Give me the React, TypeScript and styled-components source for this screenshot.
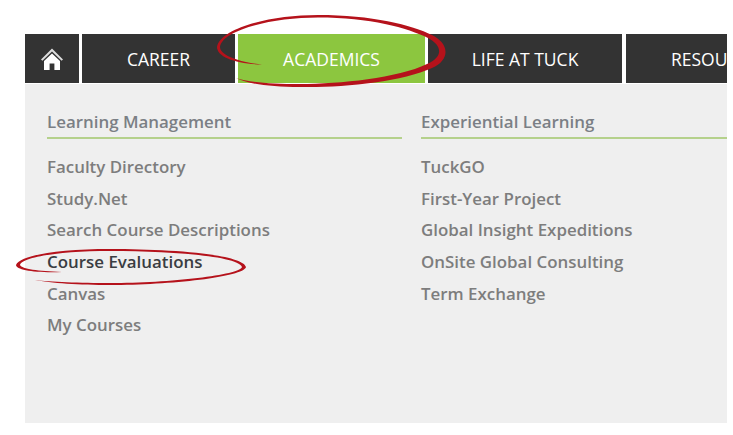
import { FC } from "react";
import styled, { createGlobalStyle } from "styled-components";

const columns = [
  {
    title: "Learning Management",
    links: ["Faculty Directory", "Study.Net", "Search Course Descriptions", "Course Evaluations", "Canvas", "My Courses"],
  },
  {
    title: "Experiential Learning",
    links: ["TuckGO", "First-Year Project", "Global Insight Expeditions", "OnSite Global Consulting", "Term Exchange"],
  },
];

const App: FC = () => {
  return (
    <SPage>
      <GlobalStyle />
      <SNav>
        <SHomeTab>
          <svg width="24" height="24" viewBox="0 0 24 24" aria-hidden="true">
            <path d="M12 1.5 1 12.5l1.4 1.3L12 4.6l9.6 9.2 1.4-1.3z" fill="#ddd" />
            <path d="M12 6.4 4 14v9h5.6v-6.6h4.8V23H20v-9z" fill="#fff" />
          </svg>
        </SHomeTab>
        <STab $width={153}>CAREER</STab>
        <STab $width={187} $active>ACADEMICS</STab>
        <STab $width={194}>LIFE AT TUCK</STab>
        <SCutTab>RESOU</SCutTab>
      </SNav>
      <SPanel>
        {columns.map((column) => (
          <SColumn key={column.title}>
            <SHeading>{column.title}</SHeading>
            <SList>
              {column.links.map((link) => (
                <SLink key={link} $current={link === "Course Evaluations"}>{link}</SLink>
              ))}
            </SList>
          </SColumn>
        ))}
      </SPanel>
      <SMarks viewBox="0 0 733 435" aria-hidden="true">
        <path d="M262 64.5C236 64 217 57 217 47C220 28 270 15 318 15C372 15 412 25 432 35C450 44 450 60 432 68C402 82 340 88 300 87C270 87 248 84 236 78C248 82 270 84 300 84C340 84 398 78 427 64C443 57 443 46 428 38C408 28 370 17.5 318 17.5C272 17.5 222 30 220 47C220 55 238 62 262 64.5Z" />
        <path d="M62 272C35 273 16 270 16 265C20 255 60 249 110 249C170 249 242 254 246 267C244 277 170 285 110 285C80 285 50 283 35 280C50 282 80 283 110 283C170 283 240 275 242 267C238 256 170 251 110 251C60 251 22 257 20 265C22 269 38 271 62 272Z" />
      </SMarks>
    </SPage>
  );
};

export default App;

const GlobalStyle = createGlobalStyle`
  html, body {
    margin: 0;
    background: #fff;
  }
`;

const SPage = styled.div`
  position: relative;
  width: 733px;
  height: 435px;
  padding: 34px 6px 13px 25px;
  box-sizing: border-box;
  overflow: hidden;
  font-family: "Open Sans", "Noto Sans", sans-serif;
`;

const SNav = styled.nav`
  display: flex;
  gap: 3px;
  height: 49px;
  overflow: hidden;
`;

const SHomeTab = styled.div`
  flex: 0 0 54px;
  display: flex;
  align-items: center;
  justify-content: center;
  background: #333;
`;

const STab = styled.div<{ $width: number; $active?: boolean }>`
  flex: 0 0 ${(p) => p.$width}px;
  display: flex;
  align-items: center;
  justify-content: center;
  background: ${(p) => (p.$active ? "#8cc63f" : "#333")};
  color: #fff;
  font-size: 17.5px;
`;

const SCutTab = styled(STab).attrs({ $width: 100 })`
  justify-content: flex-start;
  margin-left: 1px;
  padding-left: 45px;
  box-sizing: border-box;
`;

const SPanel = styled.div`
  display: flex;
  height: 339px;
  margin-top: 1px;
  padding: 26px 0 0 22px;
  box-sizing: border-box;
  gap: 19px;
  background: #efefef;
`;

const SColumn = styled.section`
  flex: 0 0 355px;
  &:last-child {
    flex: 1;
  }
`;

const SHeading = styled.h3`
  margin: 0;
  height: 27px;
  border-bottom: 2px solid #b5d18c;
  font-size: 16.9px;
  font-weight: 600;
  line-height: 24px;
  color: #7b7f85;
`;

const SList = styled.div`
  display: flex;
  flex-direction: column;
  gap: 9.7px;
  margin-top: 17px;
`;

const SLink = styled.div<{ $current?: boolean }>`
  height: 22px;
  font-size: 16.9px;
  font-weight: 600;
  line-height: 22px;
  color: ${(p) => (p.$current ? "#3a3d42" : "#7d7d7d")};
`;

const SMarks = styled.svg`
  position: absolute;
  top: 0;
  left: 0;
  width: 733px;
  height: 435px;
  fill: #b5121b;
  pointer-events: none;
`;
